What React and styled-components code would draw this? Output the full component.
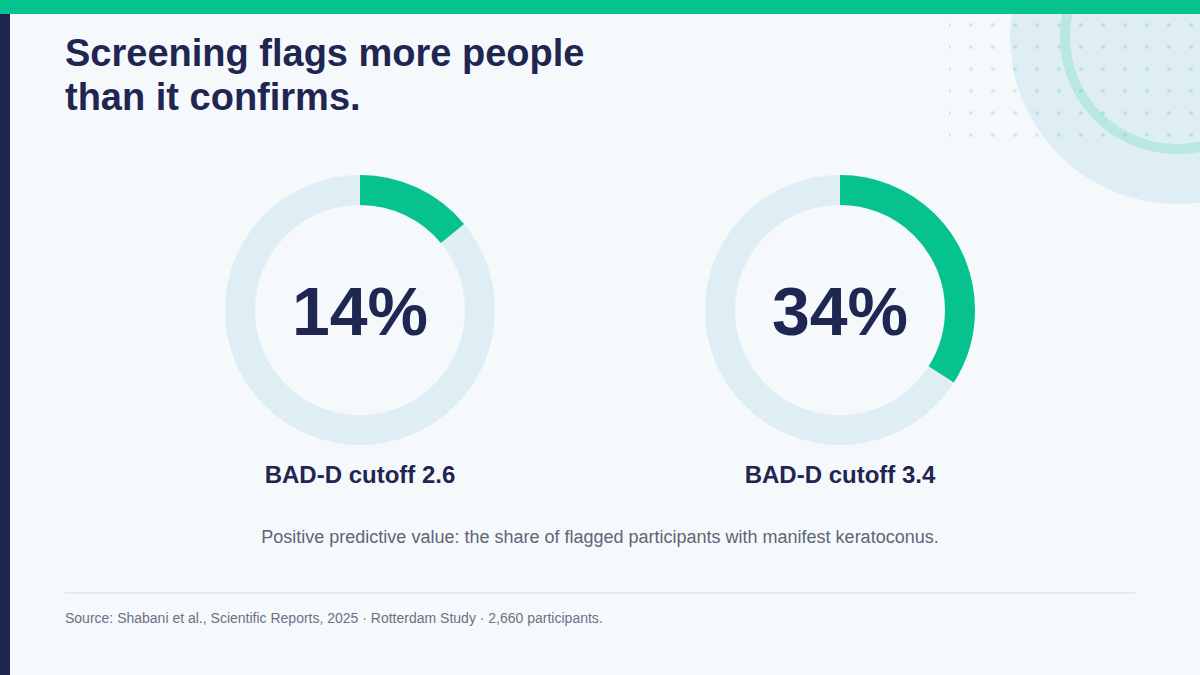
import React from "react";
import styled, { createGlobalStyle } from "styled-components";

const Global = createGlobalStyle`
  html, body { margin: 0; padding: 0; }
  body { background: #f5f9fc; font-family: "Liberation Sans", Arial, sans-serif; }
  * { box-sizing: border-box; }
`;

const Page = styled.div`
  position: relative;
  width: 1200px;
  height: 675px;
  overflow: hidden;
  background: #f5f9fc;
  display: flex;
  flex-direction: column;
`;

const TopBar = styled.div`
  height: 14px;
  flex: none;
  background: #06c28e;
`;

const Body = styled.div`
  flex: 1;
  display: flex;
`;

const SideBar = styled.div`
  width: 10px;
  flex: none;
  background: #1f2651;
`;

const Content = styled.main`
  position: relative;
  flex: 1;
  padding: 18px 65px 0 55px;
  display: flex;
  flex-direction: column;
`;

const Title = styled.h1`
  margin: 0;
  font-size: 38px;
  line-height: 43.5px;
  font-weight: 700;
  color: #1f2651;
`;

const Charts = styled.div`
  margin-top: 56px;
  display: flex;
  justify-content: center;
  gap: 210px;
`;

const ChartCol = styled.div`
  width: 270px;
  display: flex;
  flex-direction: column;
  align-items: center;
`;

const DonutWrap = styled.div`
  position: relative;
  width: 270px;
  height: 270px;
  display: flex;
  align-items: center;
  justify-content: center;
`;

const DonutSvg = styled.svg`
  position: absolute;
  inset: 0;
`;

const Value = styled.div`
  position: relative;
  font-size: 68px;
  font-weight: 700;
  color: #1f2651;
  line-height: 1;
  margin-top: 2px;
`;

const Label = styled.div`
  margin-top: 16px;
  font-size: 24px;
  line-height: 1.2;
  font-weight: 700;
  color: #1f2651;
`;

const Caption = styled.p`
  margin: 36px 0 0;
  text-align: center;
  font-size: 18px;
  line-height: 1.3;
  color: #5e6577;
`;

const Divider = styled.hr`
  margin: 43px 0 0;
  border: none;
  height: 2px;
  background: #dcedf3;
`;

const Source = styled.p`
  margin: 15px 0 0;
  font-size: 14px;
  line-height: 1.3;
  color: #6b7284;
`;

const Decoration = styled.svg`
  position: absolute;
  top: 14px;
  right: 0;
  pointer-events: none;
`;

const R = 120;
const C = 2 * Math.PI * R;

function Donut({ pct, label }) {
  const len = (pct / 100) * C;
  return (
    <ChartCol>
      <DonutWrap>
        <DonutSvg width="270" height="270" viewBox="0 0 270 270">
          <circle cx="135" cy="135" r={R} fill="none" stroke="#deeef4" strokeWidth="30" />
          <circle
            cx="135"
            cy="135"
            r={R}
            fill="none"
            stroke="#06c28e"
            strokeWidth="30"
            strokeDasharray={`${len} ${C}`}
            transform="rotate(-90 135 135)"
          />
        </DonutSvg>
        <Value>{pct}%</Value>
      </DonutWrap>
      <Label>{label}</Label>
    </ChartCol>
  );
}

function Deco() {
  const ox = 940;
  const oy = 14;
  const dots = [];
  for (let r = 0; r < 6; r++) {
    for (let c = 0; c < 12; c++) {
      const x = 949 + c * 22 - ox;
      const y = 25 + r * 22 - oy;
      dots.push(<circle key={`${r}-${c}`} cx={x} cy={y} r="2.1" fill="#06c28e" fillOpacity="0.18" />);
    }
  }
  return (
    <Decoration width="260" height="200" viewBox="0 0 260 200">
      <defs>
        <clipPath id="dotclip">
          <rect x={949 - ox} y="0" width="260" height="200" />
        </clipPath>
      </defs>
      <circle cx={1177 - ox} cy={37 - oy} r="167" fill="#deeef4" />
      <circle cx={1177 - ox} cy={37 - oy} r="112" fill="none" stroke="#06c28e" strokeOpacity="0.17" strokeWidth="10" />
      <g clipPath="url(#dotclip)">{dots}</g>
    </Decoration>
  );
}

export default function App() {
  return (
    <>
      <Global />
      <Page>
        <TopBar />
        <Body>
          <SideBar />
          <Content>
            <Title>
              Screening flags more people
              <br />
              than it confirms.
            </Title>
            <Charts>
              <Donut pct={14} label="BAD-D cutoff 2.6" />
              <Donut pct={34} label="BAD-D cutoff 3.4" />
            </Charts>
            <Caption>
              Positive predictive value: the share of flagged participants with manifest keratoconus.
            </Caption>
            <Divider />
            <Source>
              Source: Shabani et al., Scientific Reports, 2025 · Rotterdam Study · 2,660 participants.
            </Source>
          </Content>
        </Body>
        <Deco />
      </Page>
    </>
  );
}
